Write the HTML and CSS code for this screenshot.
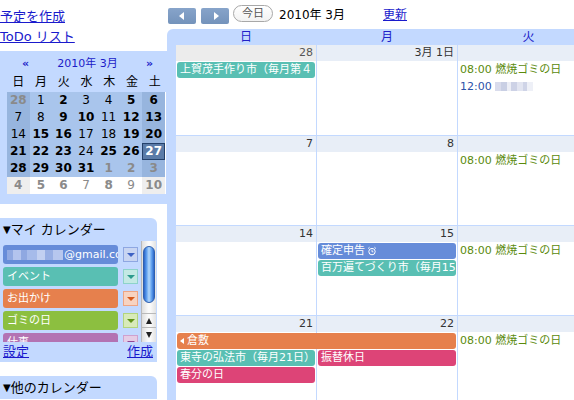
FILE: index.html
```html
<!DOCTYPE html>
<html lang="ja">
<head>
<meta charset="utf-8">
<title>カレンダー</title>
<link rel="stylesheet" href="styles.css">
</head>
<body>
<div class="app">
  <aside class="side">
    <div class="side-links">
      <a href="#">予定を作成</a>
      <a href="#">ToDo リスト</a>
    </div>

    <div class="mini">
      <div class="mini-title"><span class="nav">«</span><span>2010年 3月</span><span class="nav">»</span></div>
      <div class="mini-grid mini-head">
        <span>日</span><span>月</span><span>火</span><span>水</span><span>木</span><span>金</span><span>土</span>
      </div>
      <div class="mini-grid mini-days">
        <span class="we gray b">28</span><span>1</span><span class="b">2</span><span>3</span><span>4</span><span class="b">5</span><span class="we b">6</span>
        <span class="we">7</span><span>8</span><span class="b">9</span><span class="b">10</span><span>11</span><span class="b">12</span><span class="we b">13</span>
        <span class="we">14</span><span class="b">15</span><span class="b">16</span><span>17</span><span>18</span><span class="b">19</span><span class="we b">20</span>
        <span class="we b">21</span><span class="b">22</span><span class="b">23</span><span>24</span><span class="b">25</span><span class="b">26</span><span class="today b">27</span>
        <span class="we b">28</span><span class="b">29</span><span class="b">30</span><span class="b">31</span><span class="gray b">1</span><span class="gray b">2</span><span class="we gray b">3</span>
        <span class="out owe gray b">4</span><span class="out gray b">5</span><span class="out gray b">6</span><span class="out gray">7</span><span class="out gray b">8</span><span class="out gray">9</span><span class="out owe gray b">10</span>
      </div>
    </div>

    <div class="panel">
      <div class="panel-h"><span class="tri">▼</span>マイ カレンダー</div>
      <div class="cal-list">
        <div class="cal-items">
          <div class="cal-row blue"><div class="cal-name"><span class="blur blur-a"></span>@gmail.com</div><div class="dd"></div></div>
          <div class="cal-row teal"><div class="cal-name">イベント</div><div class="dd"></div></div>
          <div class="cal-row orange"><div class="cal-name">お出かけ</div><div class="dd"></div></div>
          <div class="cal-row green"><div class="cal-name">ゴミの日</div><div class="dd"></div></div>
          <div class="cal-row purple"><div class="cal-name">仕事</div><div class="dd"></div></div>
        </div>
        <div class="sb">
          <div class="sb-track"><div class="sb-thumb"></div></div>
          <div class="sb-btn up"></div>
          <div class="sb-btn down"></div>
        </div>
      </div>
      <div class="panel-f"><a href="#">設定</a><a href="#">作成</a></div>
    </div>

    <div class="panel">
      <div class="panel-h"><span class="tri">▼</span>他のカレンダー</div>
    </div>
  </aside>

  <main class="main">
    <div class="toolbar">
      <button class="navbtn prev" aria-label="前へ"></button>
      <button class="navbtn next" aria-label="次へ"></button>
      <button class="today-btn">今日</button>
      <span class="cur">2010年 3月</span>
      <a href="#" class="refresh">更新</a>
    </div>

    <div class="cal">
      <div class="cal-head">
        <span>日</span><span>月</span><span>火</span>
      </div>

      <div class="week first">
        <div class="dh c1 prevm">28</div>
        <div class="dh c2">3月 1日</div>
        <div class="dh c3">2</div>
        <div class="cell c1"></div><div class="cell c2"></div><div class="cell c3"></div>
        <div class="ev teal c1 r1">上賀茂手作り市（毎月第４</div>
        <div class="tm gtext c3 r1">08:00 燃焼ゴミの日</div>
        <div class="tm btext c3 r2">12:00 <span class="blur blur-b"></span></div>
      </div>

      <div class="week">
        <div class="dh c1">7</div>
        <div class="dh c2">8</div>
        <div class="dh c3">9</div>
        <div class="cell c1"></div><div class="cell c2"></div><div class="cell c3"></div>
        <div class="tm gtext c3 r1">08:00 燃焼ゴミの日</div>
      </div>

      <div class="week">
        <div class="dh c1">14</div>
        <div class="dh c2">15</div>
        <div class="dh c3">16</div>
        <div class="cell c1"></div><div class="cell c2"></div><div class="cell c3"></div>
        <div class="ev blue c2 r1">確定申告 <svg class="alarm" viewBox="0 0 10 10" width="10" height="10"><circle cx="5" cy="5.6" r="3.2" fill="none" stroke="#fff" stroke-width="1"/><path d="M1 2.6 L2.6 1.2 M9 2.6 L7.4 1.2 M5 3.8 V5.8 H6.4" fill="none" stroke="#fff" stroke-width="0.9"/></svg></div>
        <div class="ev teal c2 r2">百万遍てづくり市（毎月15日）</div>
        <div class="tm gtext c3 r1">08:00 燃焼ゴミの日</div>
      </div>

      <div class="week">
        <div class="dh c1">21</div>
        <div class="dh c2">22</div>
        <div class="dh c3">23</div>
        <div class="cell c1"></div><div class="cell c2"></div><div class="cell c3"></div>
        <div class="ev orange c12 r1"><span class="larr"></span>倉敷</div>
        <div class="ev teal c1 r2">東寺の弘法市（毎月21日）</div>
        <div class="ev pink c2 r2">振替休日</div>
        <div class="ev pink c1 r3">春分の日</div>
        <div class="tm gtext c3 r1">08:00 燃焼ゴミの日</div>
      </div>
    </div>
  </main>
</div>
</body>
</html>
```

FILE: styles.css
```css
* { box-sizing: border-box; }
html, body { margin: 0; padding: 0; }
body {
  font-family: "DejaVu Sans", "Noto Sans CJK JP", sans-serif;
  font-size: 12px;
  color: #000;
  background: #fff;
  width: 574px;
  height: 400px;
  overflow: hidden;
}
a { color: #1a1acc; text-decoration: underline; }

.app { display: flex; height: 400px; }
.side { width: 167px; flex: none; }
.main { flex: 1; min-width: 0; overflow: hidden; }

/* sidebar links */
.side-links { padding-top: 7px; }
.side-links a { display: block; width: max-content; font-size: 13px; line-height: 20px; }

/* mini calendar */
.mini { margin-top: 4px; background: #c3d9ff; padding: 4px 0 10px 7px; }
.mini-title {
  display: flex; justify-content: space-between;
  width: 159px; padding: 0 13px 0 15px;
  line-height: 18px; font-size: 11px; color: #1c1cc8;
}
.mini-title .nav { font-weight: bold; }
.mini-grid { display: grid; grid-template-columns: repeat(7, 1fr); width: 159px; }
.mini-head { padding-bottom: 1px; }
.mini-head span { text-align: center; line-height: 18px; font-size: 12px; }
.mini-days { border-right: 1px solid #fff; }
.mini-days span {
  height: 17px; line-height: 17px; text-align: center; font-size: 12px;
  background: #a9c5ec;
}
.mini-days .we { background: #97b5de; }
.mini-days .b { font-weight: bold; }
.mini-days .gray { color: #8a8a8a; }
.mini-days .out { background: #fff; }
.mini-days .owe { background: #eeeeee; }
.mini-days .today { background: #5a7ba8; color: #fff; box-shadow: inset 0 0 0 1px #23406a; }

/* calendar list panels */
.panel { background: #c3d9ff; width: 157px; border-top-right-radius: 6px; margin-top: 14px; }
.panel-h { line-height: 23px; padding-left: 3px; font-size: 13px; white-space: nowrap; }
.tri { font-size: 10px; vertical-align: 1px; }
.cal-list { display: flex; height: 101px; }
.cal-items { width: 141px; padding: 4px 0 0 3px; overflow: hidden; }
.cal-row { display: flex; align-items: center; margin-bottom: 3px; }
.cal-name {
  width: 115px; height: 19px; flex: none; border-radius: 3px;
  color: #fff; font-size: 11px; line-height: 19px; padding-left: 4px;
  white-space: nowrap; overflow: hidden;
  display: flex; align-items: center;
}
.dd {
  width: 15px; height: 15px; margin-left: 5px; flex: none;
  border: 1px solid; display: flex; align-items: center; justify-content: center;
}
.dd::after {
  content: ""; border-left: 4px solid transparent; border-right: 4px solid transparent;
  border-top: 4px solid currentColor; margin-top: 1px;
}
.cal-row.blue .cal-name { background: #668cd9; }
.cal-row.blue .dd { background: #c8d5f2; border-color: #8ea7e2; color: #3d62c4; }
.cal-row.teal .cal-name { background: #59bfb3; }
.cal-row.teal .dd { background: #c3e9e4; border-color: #8dd3ca; color: #2c9a8d; }
.cal-row.orange .cal-name { background: #e6804d; }
.cal-row.orange .dd { background: #f7d3c1; border-color: #eea583; color: #d65a1d; }
.cal-row.green .cal-name { background: #8cbf40; }
.cal-row.green .dd { background: #d8eab9; border-color: #b3d57d; color: #619419; }
.cal-row.purple .cal-name { background: #b373b3; }
.cal-row.purple .dd { background: #e5cce5; border-color: #cfa1cf; color: #944794; }

.blur { display: inline-block; height: 10px; flex: none; }
.blur-a {
  width: 56px; margin-right: 1px;
  background: linear-gradient(90deg, #90a9e2 0 6px, #b3c4ee 6px 14px, #8fa8e1 14px 20px, #a6bbea 20px 30px, #c2d0f1 30px 38px, #98afe4 38px 46px, #b7c7ee 46px 56px);
}
.blur-b {
  width: 38px; height: 9px; vertical-align: -1px;
  background: linear-gradient(90deg, #d9dcec 0 6px, #c9cfe4 6px 12px, #eceef6 12px 16px, #cdd2e6 16px 22px, #e2e5f1 22px 28px, #cfd4e7 28px 32px, #eef0f7 32px 38px);
}

/* aqua scrollbar */
.sb {
  width: 15px; flex: none; display: flex; flex-direction: column;
  border-left: 1px solid #b9b9b9;
  background: linear-gradient(90deg, #dedede, #fafafa 45%, #fafafa 60%, #e2e2e2);
}
.sb-track { flex: 1; padding: 5px 1px 0 1px; }
.sb-thumb {
  height: 57px; border-radius: 7px; border: 1px solid #2f5fae;
  background: linear-gradient(90deg, #2a64c8, #5d9ded 25%, #b4d8fb 50%, #64a3ef 75%, #2b66c9);
}
.sb-btn { height: 14px; border-top: 1px solid #b9b9b9; display: flex; align-items: center; justify-content: center; }
.sb-btn::after { content: ""; border-left: 3.5px solid transparent; border-right: 3.5px solid transparent; }
.sb-btn.up::after { border-bottom: 6px solid #222; }
.sb-btn.down::after { border-top: 6px solid #222; }
.sb-btn.down { margin-bottom: 1px; }

.panel-f {
  display: flex; justify-content: space-between;
  padding: 0 4px 0 3px; line-height: 20px; font-size: 13px;
}

/* toolbar */
.toolbar { display: flex; align-items: flex-start; height: 29px; padding-left: 1px; }
.navbtn {
  width: 28px; height: 16px; margin-top: 8px; padding: 0; border: 0; border-radius: 2px;
  background: linear-gradient(#87a4ca, #7493bb);
  display: flex; align-items: center; justify-content: center;
}
.navbtn + .navbtn { margin-left: 5px; }
.navbtn::after { content: ""; border-top: 4.5px solid transparent; border-bottom: 4.5px solid transparent; }
.navbtn.prev::after { border-right: 5px solid #fff; margin-right: 2px; }
.navbtn.next::after { border-left: 5px solid #fff; margin-left: 2px; }
.today-btn {
  margin: 5px 0 0 4px; width: 40px; height: 17px; padding: 0;
  border: 1px solid #a8a8a8; border-radius: 9px; background: linear-gradient(#fff, #f2f2f2);
  font: 11px "DejaVu Sans", "Noto Sans CJK JP", sans-serif; color: #555; line-height: 15px;
}
.cur { margin: 6px 0 0 6px; width: 104px; font-size: 12px; line-height: 18px; }
.refresh { margin-top: 6px; font-size: 12px; line-height: 18px; }

/* month grid */
.cal { background: #c3d9ff; border-top-left-radius: 6px; padding-left: 9px; width: 432px; height: 371px; }
.cal-head {
  display: grid; grid-template-columns: 140px 140px 141px; column-gap: 1px;
  height: 16px; line-height: 16px; color: #2020c8; font-size: 12px;
}
.cal-head span { text-align: center; }
.week {
  display: grid; grid-template-columns: 140px 140px 141px; column-gap: 1px;
  grid-template-rows: 16px 17px 17px 17px 1fr;
  height: 90px; border-top: 1px solid #c3d9ff;
}
.week.first { border-top: 0; }
.dh {
  grid-row: 1; background: #e8eef7; color: #333; font-size: 11px;
  text-align: right; padding-right: 3px; line-height: 16px; white-space: nowrap;
}
.dh.prevm { background: #ececec; color: #555; }
.cell { grid-row: 2 / -1; background: #fff; }
.c1 { grid-column: 1; }
.c2 { grid-column: 2; }
.c3 { grid-column: 3; }
.c12 { grid-column: 1 / 3; }
.r1 { grid-row: 2; }
.r2 { grid-row: 3; }
.r3 { grid-row: 4; }
.ev {
  margin: 1px 1px 0; height: 16px; border-radius: 3px;
  color: #fff; font-size: 11px; line-height: 16px; padding-left: 3px;
  white-space: nowrap; overflow: hidden; display: flex; align-items: center;
}
.ev.teal { background: #59bfb3; }
.ev.blue { background: #668cd9; }
.ev.orange { background: #e6804d; }
.ev.pink { background: #dd4477; }
.alarm { margin-left: 2px; flex: none; }
.larr {
  width: 0; height: 0; margin: 0 3px 0 0;
  border-top: 3.5px solid transparent; border-bottom: 3.5px solid transparent;
  border-right: 4px solid #fff;
}
.tm {
  margin-top: 1px; padding-left: 2px; font-size: 11px; line-height: 16px;
  white-space: nowrap; overflow: hidden;
}
.gtext { color: #5a8a0c; }
.btext { color: #2c52a8; }
```
